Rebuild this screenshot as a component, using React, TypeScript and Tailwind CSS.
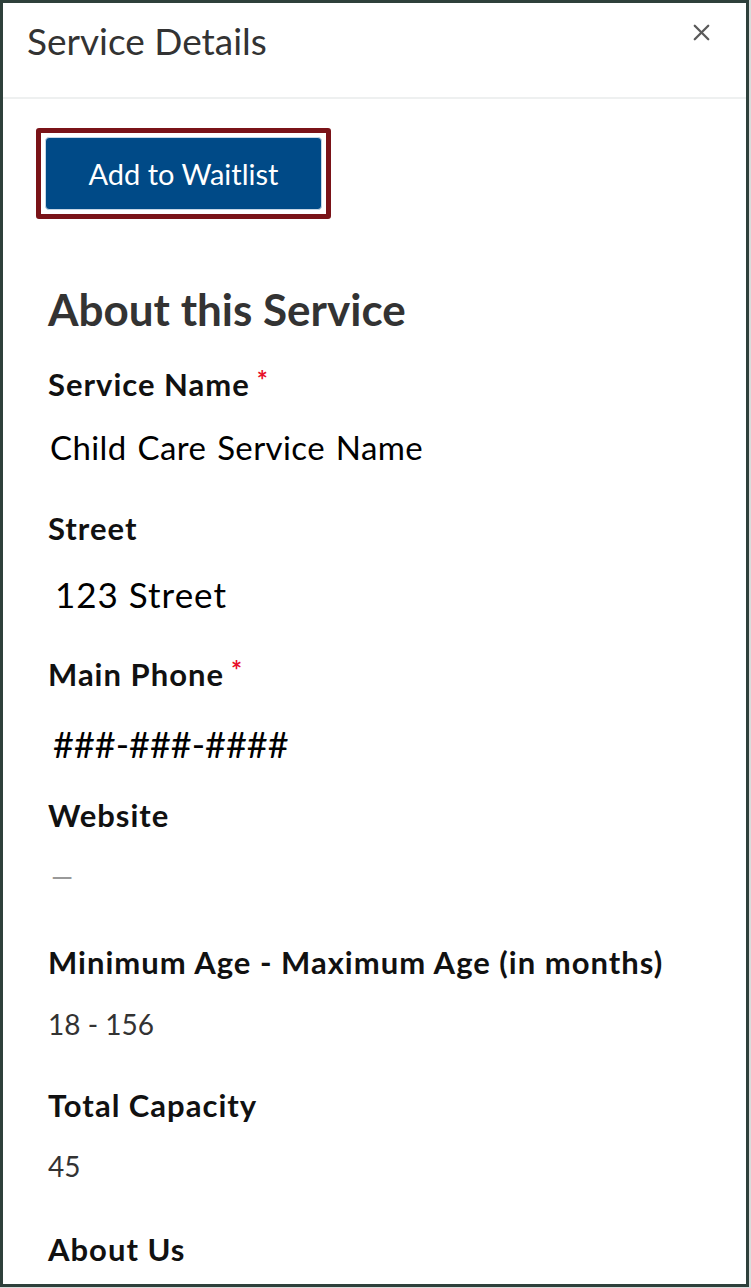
import { X } from 'lucide-react';

function Label({ text, required, className = '' }: { text: string; required?: boolean; className?: string }) {
  return (
    <div className={`text-[31px] font-bold leading-none tracking-[1px] text-[#111] ${className}`}>
      {text}
      {required && (
        <span className="relative top-[-6px] ml-[7px] text-[26px] leading-none tracking-normal text-[#e8102a]">*</span>
      )}
    </div>
  );
}

export default function App() {
  return (
    <div className="h-[1288px] w-[751px] bg-[#d9dcdb] font-['Lato',sans-serif]">
      <div className="flex h-[1287px] w-[749px] flex-col overflow-hidden border-[3px] border-[#2e403b] bg-white">
        {/* header */}
        <div className="flex h-[94px] items-start justify-between pl-[24px] pr-[31px]">
          <h2 className="mt-[19px] text-[37px] leading-none text-[#333]">Service Details</h2>
          <button className="mt-[16px] text-[#5a5a5a]">
            <X size={27} strokeWidth={2} />
          </button>
        </div>
        <div className="h-[2px] bg-[#eef0f0]" />

        <div className="pl-[33px] pt-[29px]">
          <div className="h-[91px] w-[295px] rounded-[3px] border-[5px] border-[#7a1318] p-[4px]">
            <button className="flex h-full w-full items-center justify-center rounded-[4px] border border-[#c5d6e6] bg-[#004a87] text-[29px] text-white">
              Add to Waitlist
            </button>
          </div>

          <div className="pl-[12px]">
            <h3 className="mt-[68px] text-[44px] font-bold leading-none text-[#333]">About this Service</h3>

            <Label text="Service Name" required className="mt-[38px]" />
            <div className="mt-[31px] pl-[2px] text-[33px] leading-none tracking-[0.4px] text-black [word-spacing:2px]">
              Child Care Service Name
            </div>

            <Label text="Street" className="mt-[49px]" />
            <div className="mt-[33px] pl-[7px] text-[35px] leading-none tracking-[1px] text-black">123 Street</div>

            <Label text="Main Phone" required className="mt-[47px]" />
            <div className="mt-[36px] pl-[5px] text-[36px] leading-none text-black">###-###-####</div>

            <Label text="Website" className="mt-[38px]" />
            <div className="mt-[31px] pl-[3px] text-[28px] leading-none text-[#999]">—</div>

            <Label text="Minimum Age - Maximum Age (in months)" className="mt-[57px]" />
            <div className="mt-[32px] text-[28px] leading-none text-[#333]">18 - 156</div>

            <Label text="Total Capacity" className="mt-[52px]" />
            <div className="mt-[31px] text-[28px] leading-none text-[#333]">45</div>

            <Label text="About Us" className="mt-[54px]" />
          </div>
        </div>
      </div>
    </div>
  );
}
